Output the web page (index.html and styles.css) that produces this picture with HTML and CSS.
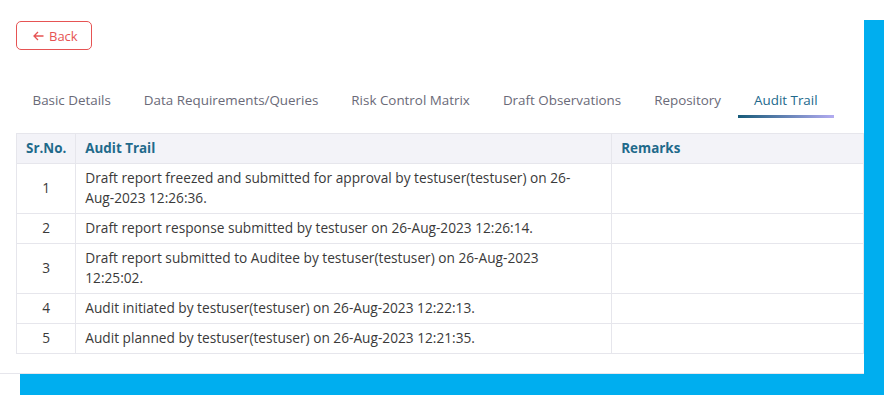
FILE: index.html
```html
<!DOCTYPE html>
<html lang="en">
<head>
  <meta charset="UTF-8">
  <meta name="viewport" content="width=device-width, initial-scale=1.0">
  <title>Audit Trail</title>
  <link rel="stylesheet" href="styles.css">
</head>
<body>
  <div class="frame">
    <div class="card">
      <div class="toolbar">
        <button class="back-btn">
          <svg class="arrow" width="11" height="10" viewBox="0 0 11 10" fill="none" stroke="currentColor" stroke-width="1.3">
            <path d="M10.5 5H1M5 1L1 5l4 4"/>
          </svg>
          Back
        </button>
      </div>

      <ul class="tabs">
        <li class="tab">Basic Details</li>
        <li class="tab">Data Requirements/Queries</li>
        <li class="tab">Risk Control Matrix</li>
        <li class="tab">Draft Observations</li>
        <li class="tab">Repository</li>
        <li class="tab active">Audit Trail</li>
      </ul>

      <table class="trail">
        <thead>
          <tr>
            <th class="col-no">Sr.No.</th>
            <th class="col-text">Audit Trail</th>
            <th class="col-remarks">Remarks</th>
          </tr>
        </thead>
        <tbody>
          <tr>
            <td class="col-no">1</td>
            <td class="col-text">Draft report freezed and submitted for approval by testuser(testuser) on 26-Aug-2023 12:26:36.</td>
            <td></td>
          </tr>
          <tr>
            <td class="col-no">2</td>
            <td class="col-text">Draft report response submitted by testuser on 26-Aug-2023 12:26:14.</td>
            <td></td>
          </tr>
          <tr>
            <td class="col-no">3</td>
            <td class="col-text">Draft report submitted to Auditee by testuser(testuser) on 26-Aug-2023 12:25:02.</td>
            <td></td>
          </tr>
          <tr>
            <td class="col-no">4</td>
            <td class="col-text">Audit initiated by testuser(testuser) on 26-Aug-2023 12:22:13.</td>
            <td></td>
          </tr>
          <tr>
            <td class="col-no">5</td>
            <td class="col-text">Audit planned by testuser(testuser) on 26-Aug-2023 12:21:35.</td>
            <td></td>
          </tr>
        </tbody>
      </table>
    </div>
  </div>
</body>
</html>
```

FILE: styles.css
```css
/* General styling */
body {
  margin: 0;
  background-color: #fff;
  font-family: "Open Sans", "Noto Sans", sans-serif;
  color: #333;
  overflow: hidden;
}

/* Blue frame sitting behind the white card */
.frame {
  display: flow-root;
  margin: 20px 0 0 20px;
  height: 375px;
  background-color: #00aeef;
}

.card {
  margin: -20px 0 0 -20px;
  width: 864px;
  height: 374px;
  box-sizing: border-box;
  padding: 21px 0 0 16px;
  background-color: #fff;
  border-bottom: 1px solid #e6e6ec;
}

/* Back button */
.back-btn {
  display: flex;
  align-items: center;
  gap: 5px;
  height: 29px;
  padding: 0 13px 0 16px;
  font-family: inherit;
  font-size: 13px;
  color: #e65353;
  background-color: #fff;
  border: 1px solid #e65353;
  border-radius: 5px;
}

/* Tabs */
.tabs {
  display: flex;
  list-style: none;
  margin: 37px 0 0;
  padding: 0;
}

.tab {
  padding: 4px 16.5px 6px;
  font-size: 13.4px;
  color: #6a6a78;
  border-bottom: 3px solid transparent;
}

.tab.active {
  color: #22698c;
  border-image: linear-gradient(90deg, #155a78, #b4acf2) 1;
}

/* Audit trail table */
.trail {
  margin-top: 15px;
  width: 848px;
  border-collapse: collapse;
  font-size: 13.7px;
  color: #3a3a3a;
}

.trail th,
.trail td {
  border: 1px solid #e6e6ec;
  padding: 4px 9px 5px;
  text-align: left;
  vertical-align: middle;
  line-height: 20px;
}

.trail th {
  background-color: #f3f3f8;
  color: #1f6a8b;
  font-weight: 700;
  font-size: 13.4px;
}

.trail .col-no {
  width: 37px;
  text-align: center;
}

.trail .col-text {
  width: 500px;
  padding-right: 26px;
}
```
